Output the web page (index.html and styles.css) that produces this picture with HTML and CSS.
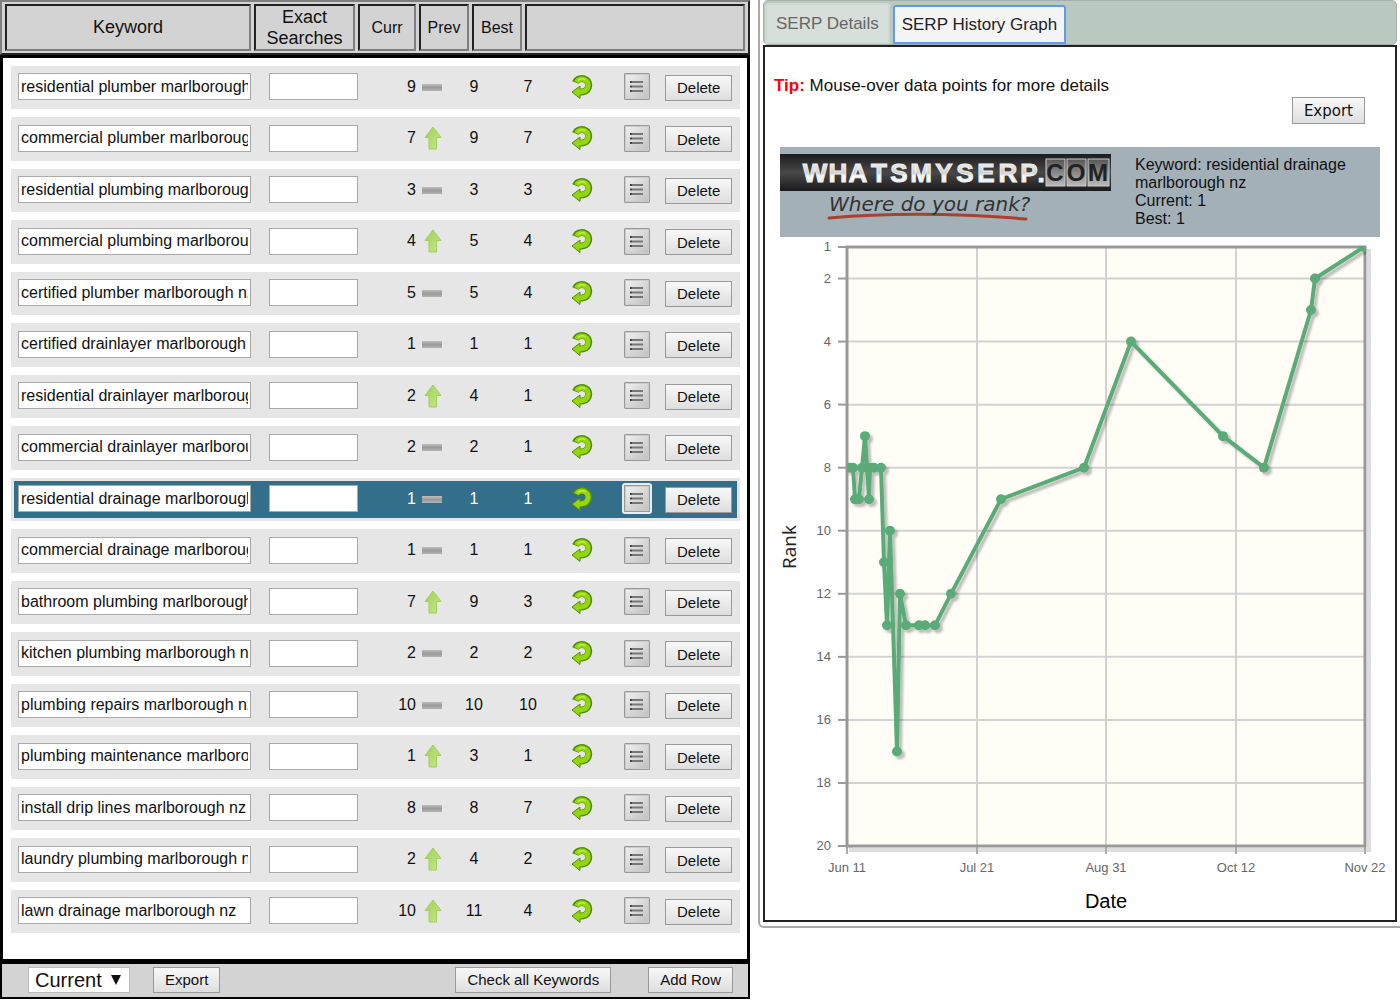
FILE: index.html
```html
<!DOCTYPE html>
<html lang="en">
<head>
  <meta charset="UTF-8">
  <meta name="viewport" content="width=device-width, initial-scale=1.0">
  <title>WhatsMySerp - Rank Checker</title>
  <link rel="stylesheet" href="styles.css">
</head>
<body>
  <svg class="defs" width="0" height="0" aria-hidden="true">
    <defs>
      <linearGradient id="greenArrow" x1="0" y1="0" x2="1" y2="1">
        <stop offset="0" stop-color="#9ccf58"/>
        <stop offset="1" stop-color="#cbe88c"/>
      </linearGradient>
      <linearGradient id="barGrey" x1="0" y1="0" x2="0" y2="1">
        <stop offset="0" stop-color="#bdbdbd"/>
        <stop offset="0.5" stop-color="#9a9a9a"/>
        <stop offset="1" stop-color="#b4b4b4"/>
      </linearGradient>
    </defs>
    <symbol id="icon-up" viewBox="0 0 22 26">
      <path d="M12 2 L20 12.500 H15.500 V24 H8 V12.500 H4 Z" fill="url(#greenArrow)" stroke="#a0cf5c" stroke-linejoin="round"/>
    </symbol>
    <symbol id="icon-same" viewBox="0 0 22 26">
      <rect x="1" y="10" width="20" height="7" fill="url(#barGrey)"/>
    </symbol>
    <symbol id="icon-refresh" viewBox="0 0 22 24">
      <path d="M4.500 7.500 C6 3.500 11 2.700 14.500 4.500 C19 7 18.500 13.500 14.500 16 C12.500 17.200 10.500 17.300 8 17.300" fill="none" stroke="#4f8f06" stroke-width="7"/>
      <path d="M1 17 L9 11 V23.500 Z" fill="#94d60a" stroke="#4f8f06" stroke-linejoin="round"/>
      <path d="M5.400 7.200 C7 4 11 3.200 14.200 4.900 C18.300 7.200 17.800 13.200 14.200 15.600 C12 17 10.500 17 6 17" fill="none" stroke="#94d60a" stroke-width="5"/>
      <path d="M7 5.500 C9.500 3.500 12.500 3.600 14.500 5" fill="none" stroke="#c1ec4e" stroke-width="1.500"/>
    </symbol>
    <symbol id="icon-list" viewBox="0 0 15 13">
      <path d="M3 2 H14 M3 6.500 H14 M3 11 H14" stroke="#777" stroke-width="2"/>
      <path d="M1 2 H3 M1 6.500 H3 M1 11 H3" stroke="#444" stroke-width="2"/>
    </symbol>
  </svg>

  <main class="layout">
    <section class="keywords">
      <table class="head-table">
        <tr>
          <th class="h-keyword">Keyword</th>
          <th class="h-exact">Exact Searches</th>
          <th class="h-curr">Curr</th>
          <th class="h-prev">Prev</th>
          <th class="h-best">Best</th>
          <th class="h-actions"></th>
        </tr>
      </table>

      <div class="list">
        <table class="rows">
          <colgroup>
            <col>
            <col class="c-exact">
            <col class="c-curr">
            <col class="c-prev">
            <col class="c-best">
            <col class="c-refresh">
            <col class="c-list">
            <col class="c-delete">
          </colgroup>
          <tbody id="rows"></tbody>
        </table>
      </div>

      <div class="toolbar">
        <select class="period" aria-label="Export range">
          <option>Current</option>
          <option>History</option>
        </select>
        <button class="btn">Export</button>
        <button class="btn check-all">Check all Keywords</button>
        <button class="btn">Add Row</button>
      </div>
    </section>

    <section class="serp">
      <div class="tabs" role="tablist">
        <button class="tab" role="tab">SERP Details</button>
        <button class="tab active" role="tab" aria-selected="true">SERP History Graph</button>
      </div>

      <div class="tab-panel" role="tabpanel">
        <p class="tip"><b>Tip:</b> Mouse-over data points for more details</p>
        <button class="btn export-graph">Export</button>

        <div class="banner">
          <svg class="logo" viewBox="0 0 331 76" role="img" aria-label="whatsmyserp.com">
            <defs>
              <linearGradient id="strip" x1="0" y1="0" x2="0" y2="1">
                <stop offset="0" stop-color="#1c1c1c"/>
                <stop offset="0.5" stop-color="#484848"/>
                <stop offset="1" stop-color="#1a1a1a"/>
              </linearGradient>
              <linearGradient id="metal" x1="0" y1="0" x2="0" y2="1">
                <stop offset="0" stop-color="#fff"/>
                <stop offset="0.5" stop-color="#ccc"/>
                <stop offset="0.6" stop-color="#fff"/>
                <stop offset="1" stop-color="#ddd"/>
              </linearGradient>
              <linearGradient id="tile" x1="0" y1="0" x2="0" y2="1">
                <stop offset="0" stop-color="#555"/>
                <stop offset="1" stop-color="#bbb"/>
              </linearGradient>
            </defs>
            <rect width="331" height="37" fill="url(#strip)"/>
            <text class="logo-name" y="28" x="35 58 78 99 119 141 164 185 206 228 249 261" fill="url(#metal)">WHATSMYSERP.</text>
            <g fill="url(#tile)" stroke="#ccc">
              <rect x="266" y="5" width="19" height="27"/>
              <rect x="287" y="5" width="19" height="27"/>
              <rect x="308" y="5" width="21" height="27"/>
            </g>
            <text class="logo-com" y="27" x="275 296 318">COM</text>
            <path d="M49 64 Q140 56 246 65" fill="none" stroke="#a8412e" stroke-width="3" stroke-linecap="round"/>
            <text class="logo-tag" x="49" y="57">Where do you rank?</text>
          </svg>
          <div class="banner-info">
            Keyword: residential drainage marlborough nz<br>
            Current: 1<br>
            Best: 1
          </div>
        </div>

        <svg id="chart" class="chart" viewBox="0 0 630 679" role="img" aria-label="Rank history"></svg>
      </div>
    </section>
  </main>

  <script src="script.js"></script>
</body>
</html>
```
FILE: styles.css
```css
* { box-sizing: border-box; }
body {
  margin: 0;
  background: #fff;
  color: #111;
  font-family: "Liberation Sans", Arial, sans-serif;
  font-size: 16px;
}
.defs { position: absolute; }
.layout {
  display: grid;
  grid-template-columns: 750fr 650fr;
  align-items: start;
}

/* keyword list */
.head-table {
  width: 100%;
  height: 55px;
  table-layout: fixed;
  border: 2px solid;
  border-color: #7f7f7f #222 #222 #7f7f7f;
  border-spacing: 3px 2px;
  background: #d3d3d3;
}
.head-table th {
  padding: 0;
  border: 2px solid;
  border-color: #222 #7f7f7f #7f7f7f #222;
  font-weight: normal;
  line-height: 21px;
}
.head-table .h-keyword, .head-table .h-exact { font-size: 18px; }
.h-exact { width: 101px; }
.h-curr { width: 58px; }
.h-prev, .h-best { width: 50px; }
.h-actions { width: 220px; }
.list {
  border: 3px solid #000;
  padding: 0 7px 18px 8px;
}
.rows {
  width: 100%;
  table-layout: fixed;
  border-spacing: 0 8px;
}
.c-exact { width: 110px; }
.c-curr { width: 78px; }
.c-prev { width: 52px; }
.c-best { width: 56px; }
.c-refresh { width: 52px; }
.c-list { width: 57px; }
.c-delete { width: 75px; }
.rows td {
  height: 43px;
  padding: 0 0 2px;
  background: #e6e6e6;
  text-align: center;
}
.rows tr:nth-child(even) td { height: 44px; }
.rows td:first-child { padding: 0 9px 2px 7px; }
.rows td:nth-child(2) { padding: 0 12px 2px 9px; }
.rows td:last-child { padding: 0; text-align: left; }
.rows input {
  display: block;
  width: 100%;
  height: 27px;
  padding: 0 2px;
  border: 1px solid #aaa;
  background: #fff;
  color: #111;
  font: 16px "Liberation Sans", Arial, sans-serif;
}
.curr {
  display: flex;
  align-items: center;
  justify-content: flex-end;
  gap: 5px;
  padding-right: 5px;
}
.curr svg { width: 22px; height: 26px; }
.icon-btn {
  display: block;
  margin: 0 auto;
  padding: 0;
  border: 0;
  background: none;
}
.icon-btn svg { display: block; width: 22px; height: 24px; }
.list-btn {
  display: flex;
  align-items: center;
  justify-content: center;
  width: 26px;
  height: 27px;
  margin: 0 auto;
  padding: 0;
  border: 1px solid #999;
  border-radius: 1px;
  background: linear-gradient(135deg, #f0f0f0, #c0c0c0);
  box-shadow: inset 0 0 0 1px #ccc;
}
.list-btn svg { width: 15px; height: 13px; }
.btn {
  height: 26px;
  padding: 0 11px;
  border: 1px solid #999;
  background: linear-gradient(#f8f8f8, #dedede);
  color: #111;
  font: 15px "Liberation Sans", Arial, sans-serif;
}
.rows .selected td {
  border: solid #e6e6e6;
  border-width: 3px 0;
  background: #336e8a;
  color: #fff;
}
.rows .selected td:first-child { border-left-width: 3px; padding-left: 4px; }
.rows .selected td:last-child { border-right-width: 3px; }
.selected .list-btn { outline: 2px solid #e8eef2; }

.toolbar {
  display: flex;
  align-items: center;
  height: 37px;
  padding: 0 15px 2px 26px;
  border: 2px solid #000;
  background: #d3d3d3;
}
.period {
  width: 102px;
  height: 26px;
  margin-right: 23px;
  padding: 0 6px;
  border: 1px solid #bbb;
  appearance: none;
  background: #fff url("data:image/svg+xml,%3Csvg xmlns='http://www.w3.org/2000/svg' width='10' height='10'%3E%3Cpath d='M0 0h10L5 10z' fill='%23111'/%3E%3C/svg%3E") no-repeat right 8px center;
  color: #111;
  font: 20px "Liberation Sans", Arial, sans-serif;
}
.check-all { margin: 0 37px 0 auto; }

/* history graph */
.serp {
  margin-left: 8px;
  padding: 0 3px 4px;
  border: solid #aaa;
  border-width: 0 0 2px 2px;
  border-radius: 0 0 0 6px;
}
.tabs {
  display: flex;
  align-items: flex-end;
  gap: 3px;
  height: 45px;
  padding-left: 1px;
  border: 1px solid #a5b0aa;
  border-radius: 5px;
  background: #b9c9c0;
}
.tab {
  height: 39px;
  padding: 0 7px;
  border: 2px solid #5e9aef;
  border-radius: 3px 3px 0 0;
  background: #f4f4f4;
  color: #222;
  font: 17px "Liberation Sans", Arial, sans-serif;
}
.tab:not(.active) {
  height: 41px;
  padding: 0 9px;
  border-color: #cdd8d1;
  background: #d6dfda;
  color: #666;
}
.tab-panel {
  border: 2px solid #222;
  padding-top: 29px;
}
.tip {
  margin: 0 0 1px 9px;
  font-size: 17px;
  line-height: 20px;
}
.tip b { color: #f00; }
.export-graph {
  display: block;
  height: 27px;
  margin: 0 30px 23px auto;
  font-family: "DejaVu Sans", Verdana, sans-serif;
}
.banner {
  display: flex;
  height: 90px;
  margin: 0 15px 4px;
  padding-top: 7px;
  background: #a3b0b8;
}
.logo { flex: none; width: 331px; height: 76px; }
.logo-name, .logo-com {
  font-size: 26px;
  font-weight: bold;
  text-anchor: middle;
}
.logo-name { stroke: #eee; }
.logo-com { font-size: 24px; fill: #222; }
.logo-tag {
  font-family: "DejaVu Sans", sans-serif;
  font-size: 20px;
  font-style: italic;
  fill: #333;
}
.banner-info {
  flex: 1;
  margin: 2px 12px 0 24px;
  line-height: 18px;
}
.chart { display: block; width: 100%; overflow: visible; }
.chart text { font-size: 13px; fill: #666; text-anchor: middle; }
.chart .rank { text-anchor: end; }
.chart .axis-date { font-size: 20px; fill: #000; }
.chart .axis-rank { font-family: "Open Sans", sans-serif; font-size: 19px; fill: #222; }
```
FILE: script.js
```javascript
// keyword, current, movement, previous, best
const keywords = [
  ['residential plumber marlborough nz', 9, 'same', 9, 7],
  ['commercial plumber marlborough nz', 7, 'up', 9, 7],
  ['residential plumbing marlborough nz', 3, 'same', 3, 3],
  ['commercial plumbing marlborough nz', 4, 'up', 5, 4],
  ['certified plumber marlborough nz', 5, 'same', 5, 4],
  ['certified drainlayer marlborough nz', 1, 'same', 1, 1],
  ['residential drainlayer marlborough nz', 2, 'up', 4, 1],
  ['commercial drainlayer marlborough nz', 2, 'same', 2, 1],
  ['residential drainage marlborough nz', 1, 'same', 1, 1],
  ['commercial drainage marlborough nz', 1, 'same', 1, 1],
  ['bathroom plumbing marlborough nz', 7, 'up', 9, 3],
  ['kitchen plumbing marlborough nz', 2, 'same', 2, 2],
  ['plumbing repairs marlborough nz', 10, 'same', 10, 10],
  ['plumbing maintenance marlborough nz', 1, 'up', 3, 1],
  ['install drip lines marlborough nz', 8, 'same', 8, 7],
  ['laundry plumbing marlborough nz', 2, 'up', 4, 2],
  ['lawn drainage marlborough nz', 10, 'up', 11, 4]
];
const selected = 8;

document.getElementById('rows').innerHTML = keywords.map(([name, curr, move, prev, best], i) => `
  <tr class="${i === selected ? 'selected' : ''}">
    <td><input type="text" aria-label="Keyword" value="${name}"></td>
    <td><input type="text" aria-label="Exact searches"></td>
    <td><div class="curr">${curr}<svg><use href="#icon-${move}"/></svg></div></td>
    <td>${prev}</td>
    <td>${best}</td>
    <td><button class="icon-btn" aria-label="Refresh"><svg><use href="#icon-refresh"/></svg></button></td>
    <td><button class="list-btn" aria-label="Details"><svg><use href="#icon-list"/></svg></button></td>
    <td><button class="btn">Delete</button></td>
  </tr>`).join('');

// x position and rank of each check
const points = [
  [85, 8], [88, 8], [90, 9], [94, 9], [97, 8], [100, 7], [104, 9], [105, 8], [109, 8], [116, 8],
  [119, 11], [122, 13], [125, 10], [132, 17], [135, 12], [141, 13], [154, 13], [160, 13], [170, 13],
  [186, 12], [236, 9], [319, 8], [366, 4], [458, 7], [499, 8], [546, 3], [550, 2], [599, 1]
];
const ranks = [1, 2, 4, 6, 8, 10, 12, 14, 16, 18, 20];
const dates = [[82, 'Jun 11'], [212, 'Jul 21'], [341, 'Aug 31'], [471, 'Oct 12'], [600, 'Nov 22']];
const left = 82, right = 600, top1 = 6, bottom = 605;
const y = rank => top1 + (rank - 1) * (bottom - top1) / 19;

const line = points.map(([px, r]) => `${px},${y(r)}`).join(' ');
const dots = points.map(([px, r]) => `<circle cx="${px}" cy="${y(r)}" r="5"/>`).join('');

document.getElementById('chart').innerHTML = `
  <defs>
    <clipPath id="plot"><rect x="${left}" y="${top1 - 1}" width="${right - left + 1}" height="${bottom - top1}"/></clipPath>
    <filter id="shadow" x="-10%" y="-10%" width="120%" height="120%">
      <feDropShadow dx="3" dy="3" stdDeviation="1" flood-color="#000" flood-opacity="0.25"/>
    </filter>
  </defs>
  <rect x="${left + 4}" y="${top1 + 4}" width="${right - left}" height="${bottom - top1}" fill="none" stroke="#ddd" stroke-width="4"/>
  <rect x="${left}" y="${top1}" width="${right - left}" height="${bottom - top1}" fill="#fffdf6"/>
  ${ranks.map(r => `
    <path d="M${left} ${y(r)} H${right}" stroke="#d2d2d2" stroke-width="${r === 1 || r === 20 ? 0 : 2}"/>
    <path d="M${left - 9} ${y(r)} H${left}" stroke="#999" stroke-width="2"/>
    <text class="rank" x="66" y="${y(r) + 4}">${r}</text>`).join('')}
  ${dates.map(([dx, label], i) => `
    <path d="M${dx} ${top1} V${bottom}" stroke="#d2d2d2" stroke-width="${i % 4 ? 2 : 0}"/>
    <path d="M${dx} ${bottom} V${bottom + 8}" stroke="#aaa" stroke-width="2"/>
    <text x="${dx}" y="631">${label}</text>`).join('')}
  <rect x="${left}" y="${top1}" width="${right - left}" height="${bottom - top1}" fill="none" stroke="#999" stroke-width="3"/>
  <g clip-path="url(#plot)">
    <g filter="url(#shadow)" fill="#5aab78">
      <polyline points="${line}" fill="none" stroke="#5aab78" stroke-width="4" stroke-linejoin="round"/>
      ${dots}
    </g>
  </g>
  <text class="axis-rank" transform="translate(31 306) rotate(-90)">Rank</text>
  <text class="axis-date" x="341" y="667">Date</text>`;
```
